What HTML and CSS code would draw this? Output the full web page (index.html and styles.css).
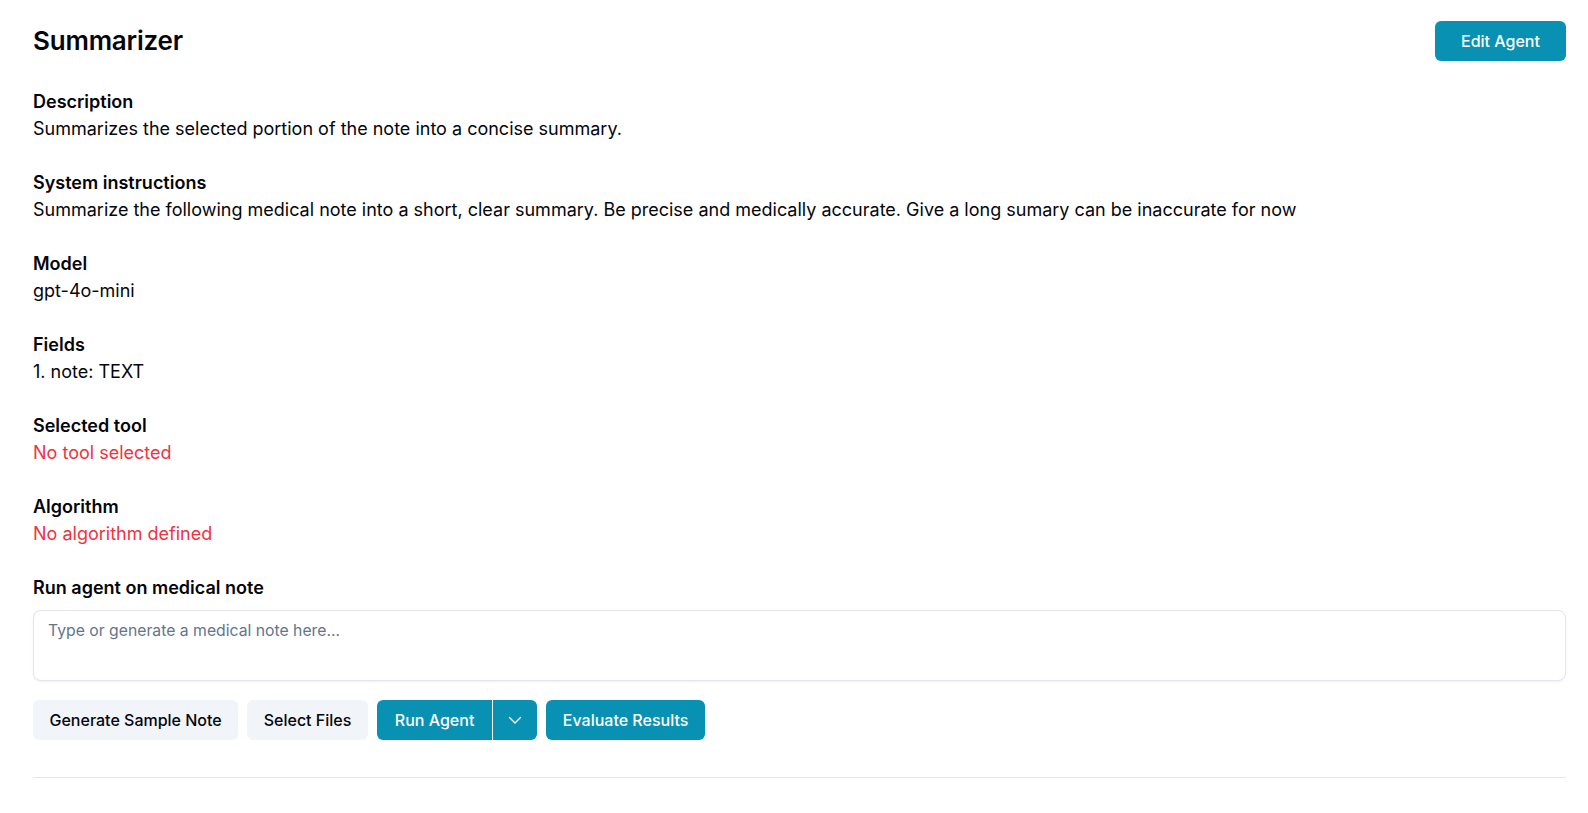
FILE: index.html
```html
<!DOCTYPE html>
<html>
<head>
<meta charset="utf-8">
<link rel="stylesheet" href="styles.css">
</head>
<body>
<div class="page">
  <div class="header">
    <h1 class="title">Summarizer</h1>
    <button class="btn btn-primary btn-edit">Edit Agent</button>
  </div>
  <div class="section">
    <div class="label">Description</div>
    <div class="value">Summarizes the selected portion of the note into a concise summary.</div>
  </div>
  <div class="section">
    <div class="label">System instructions</div>
    <div class="value">Summarize the following medical note into a short, clear summary. Be precise and medically accurate. Give a long sumary can be inaccurate for now</div>
  </div>
  <div class="section">
    <div class="label">Model</div>
    <div class="value">gpt-4o-mini</div>
  </div>
  <div class="section">
    <div class="label">Fields</div>
    <div class="value">1. note: TEXT</div>
  </div>
  <div class="section">
    <div class="label">Selected tool</div>
    <div class="value error">No tool selected</div>
  </div>
  <div class="section">
    <div class="label">Algorithm</div>
    <div class="value error">No algorithm defined</div>
  </div>
  <div class="run">
    <div class="label">Run agent on medical note</div>
    <textarea class="note" placeholder="Type or generate a medical note here..."></textarea>
    <div class="actions">
      <button class="btn btn-secondary">Generate Sample Note</button>
      <button class="btn btn-secondary">Select Files</button>
      <div class="split">
        <button class="btn btn-primary split-main">Run Agent</button>
        <button class="btn btn-primary split-toggle" aria-label="More">
          <svg width="20" height="20" viewBox="0 0 20 20" fill="none" stroke="currentColor" stroke-width="1.4" stroke-linecap="round" stroke-linejoin="round"><path d="M4.5 7.5l5.5 5.5 5.5-5.5"/></svg>
        </button>
      </div>
      <button class="btn btn-primary">Evaluate Results</button>
    </div>
  </div>
  <hr class="divider">
</div>
</body>
</html>
```

FILE: styles.css
```css
* { box-sizing: border-box; }
html, body { margin: 0; padding: 0; background: #fff; }
body {
  font-family: Inter, "Noto Sans", sans-serif;
  color: #05050c;
  font-size: 18px;
  line-height: 24px;
}
.page {
  padding: 21px 22px 0 33px;
}
.header {
  display: flex;
  justify-content: space-between;
  align-items: center;
  margin-bottom: 29px;
}
.title {
  margin: 0;
  font-size: 26px;
  line-height: 36px;
  font-weight: 600;
  letter-spacing: -0.2px;
}
.section {
  margin-bottom: 30px;
}
.label {
  font-weight: 600;
  font-size: 18px;
  line-height: 24px;
  margin-bottom: 3px;
}
.value {
  font-size: 18px;
  line-height: 24px;
}
.error { color: #f3303f; }
.run .label { margin-bottom: 10px; }
.note {
  display: block;
  width: 100%;
  height: 71px;
  border: 1px solid #e2e4ee;
  border-radius: 8px;
  box-shadow: 0 1px 3px rgba(0,0,0,0.06);
  padding: 9px 14px;
  font-family: Inter, "Noto Sans", sans-serif;
  font-size: 15.75px;
  line-height: 22px;
  resize: none;
  outline: none;
}
.note::placeholder { color: #64748b; }
.actions {
  display: flex;
  gap: 9px;
  margin-top: 19px;
}
.btn {
  height: 40px;
  border: none;
  border-radius: 6px;
  padding: 0 16.5px;
  font-family: Inter, "Noto Sans", sans-serif;
  font-size: 16px;
  font-weight: 500;
  cursor: pointer;
}
.btn-primary {
  background: #0891b2;
  color: #fff;
}
.btn-secondary {
  background: #f1f4f9;
  color: #05050c;
}
.btn-edit {
  width: 131px;
  font-size: 16px;
}
.split { display: flex; }
.split-main {
  border-radius: 6px 0 0 6px;
  padding: 0 18px;
}
.split-toggle {
  border-radius: 0 6px 6px 0;
  border-left: 1px solid #fff;
  width: 45px;
  padding: 0;
  display: flex;
  align-items: center;
  justify-content: center;
}
.divider {
  border: none;
  border-top: 1px solid #e5e7eb;
  margin: 37px 0 0;
}
```
